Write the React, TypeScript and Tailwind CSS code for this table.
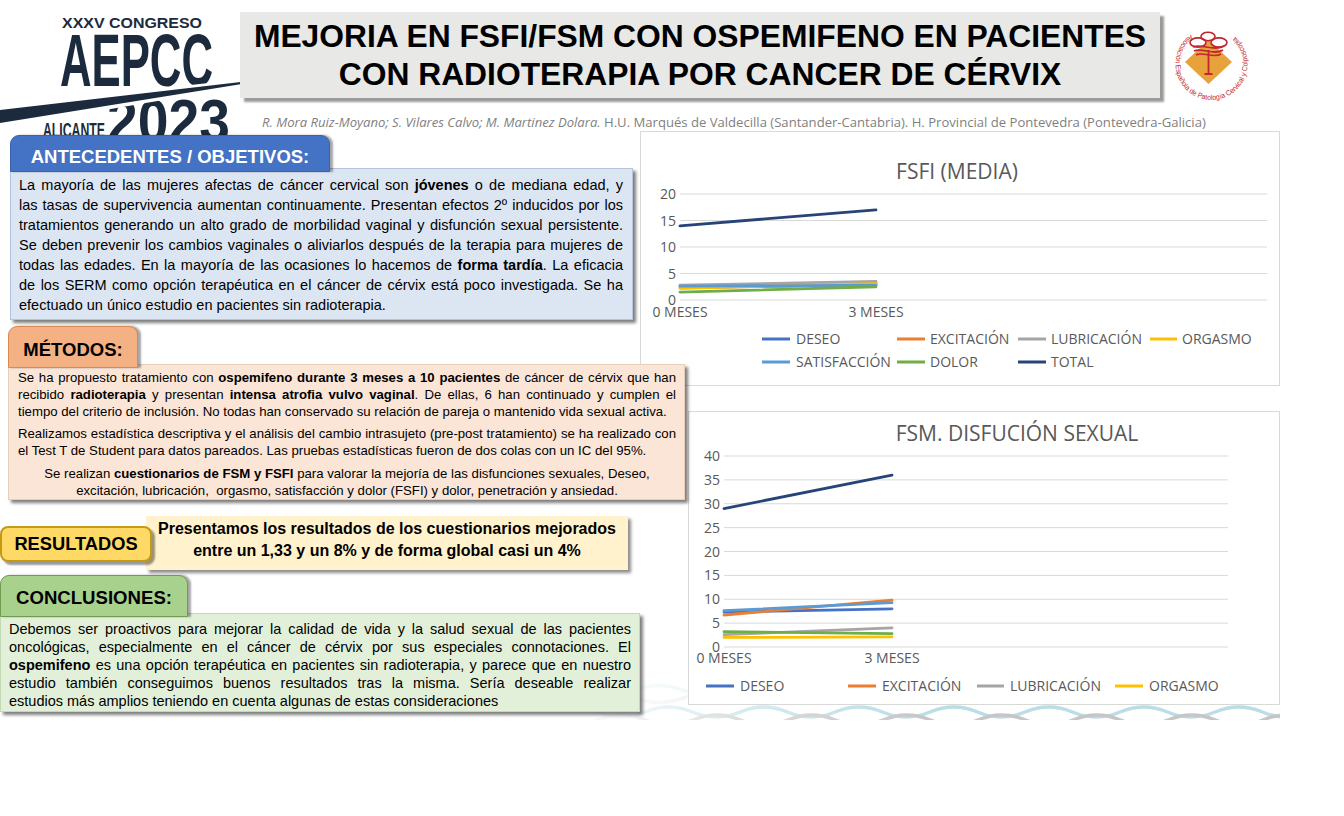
import React from "react";

const SANS = "font-['Liberation_Sans',Arial,Helvetica,sans-serif]";

function J({ children }: { children: React.ReactNode }) {
  return <div className="whitespace-nowrap text-justify [text-align-last:justify]">{children}</div>;
}
function L({ children }: { children: React.ReactNode }) {
  return <div className="whitespace-nowrap">{children}</div>;
}

function AepccLogo() {
  const navy = "#1b2b3d";
  const ff = "'Liberation Sans', Arial, sans-serif";
  return (
    <svg width="240" height="140" viewBox="0 0 240 140" className="block shrink-0 overflow-visible">
      <text x="62" y="28" textLength="140" lengthAdjust="spacingAndGlyphs" fontFamily={ff} fontWeight="700" fontSize="14" fill={navy}>
        XXXV CONGRESO
      </text>
      <text x="60" y="86" textLength="153" lengthAdjust="spacingAndGlyphs" fontFamily={ff} fontWeight="700" fontSize="74" fill={navy}>
        AEPCC
      </text>
      <text x="107" y="142" textLength="123" lengthAdjust="spacingAndGlyphs" fontFamily={ff} fontWeight="700" fontSize="62" fill={navy}>
        2023
      </text>
      <text x="43" y="137" textLength="62" lengthAdjust="spacingAndGlyphs" fontFamily={ff} fontWeight="700" fontSize="21" fill={navy}>
        ALICANTE
      </text>
      <polygon points="0,106 245,79 245,86 0,128" fill="#ffffff" />
      <polygon points="0,110 245,81.5 245,83.5 0,123" fill={navy} />
    </svg>
  );
}

function Emblem() {
  const red = "#c1272d";
  return (
    <svg width="80" height="80" viewBox="0 0 80 80" className="block ml-[10px] mt-[24px] shrink-0">
      <defs>
        <path id="ringPath" d="M 20.85 10.5 A 36 36 0 1 0 62.15 10.5" />
      </defs>
      <polygon points="38.5,16 62,38 38.5,60 15,38" fill="#e7a23b" />
      <path d="M38.5 26 V 50 M34.5 50 H42.5" stroke={red} strokeWidth="1.8" fill="none" />
      <ellipse cx="38" cy="12.5" rx="7" ry="4.2" stroke={red} strokeWidth="1.6" fill="none" />
      <ellipse cx="28" cy="18.5" rx="8" ry="4.6" stroke={red} strokeWidth="1.6" fill="none" />
      <ellipse cx="49" cy="18.5" rx="8" ry="4.6" stroke={red} strokeWidth="1.6" fill="none" />
      <path d="M23 23 C 31 19, 44 28, 54 22" stroke={red} strokeWidth="1.7" fill="none" />
      <path d="M24 27 C 32 23, 44 32, 53 26" stroke={red} strokeWidth="1.7" fill="none" />
      <path d="M26 31 C 33 27, 44 35, 51 30" stroke={red} strokeWidth="1.7" fill="none" />
      <text fontSize="7.4" fill={red} fontFamily="'Liberation Sans', Arial, sans-serif">
        <textPath href="#ringPath" textLength="178" lengthAdjust="spacingAndGlyphs">
          Asociación Española de Patología Cervical y Colposcopia
        </textPath>
      </text>
    </svg>
  );
}

function Waves() {
  const wave = (y: number, amp: number, phase: number) => {
    let d = `M ${-phase} ${y}`;
    for (let i = 0; i < 10; i++) d += ` q 23.75 ${-amp} 47.5 0 q 23.75 ${amp} 47.5 0`;
    return d;
  };
  return (
    <svg width="720" height="60" viewBox="0 0 720 60" className="absolute left-[560px] top-[660px]">
      <defs>
        <linearGradient id="fadeW" x1="0" x2="1" y1="0" y2="0">
          <stop offset="0" stopColor="#ffffff" stopOpacity="0" />
          <stop offset="0.25" stopColor="#ffffff" stopOpacity="0.6" />
          <stop offset="0.5" stopColor="#ffffff" stopOpacity="1" />
          <stop offset="1" stopColor="#ffffff" stopOpacity="1" />
        </linearGradient>
        <mask id="waveMask">
          <rect x="0" y="0" width="720" height="60" fill="url(#fadeW)" />
        </mask>
      </defs>
      <g mask="url(#waveMask)" fill="none" strokeWidth="3.5" opacity="0.8">
        <path d={wave(30, 9, 20)} stroke="#d8edf2" />
        <path d={wave(38, 9, 67)} stroke="#e3e3e3" />
        <path d={wave(52, 10, 10)} stroke="#a9d6e1" />
        <path d={wave(60, 10, 57)} stroke="#b9b9b9" />
      </g>
    </svg>
  );
}

type S = { n: string; c: string; a: number; b: number };

const C = {
  deseo: "#4472c4",
  exc: "#ed7d31",
  lub: "#a5a5a5",
  org: "#ffc000",
  sat: "#5b9bd5",
  dol: "#70ad47",
  tot: "#264478",
};

const FSFI: S[] = [
  { n: "DESEO", c: C.deseo, a: 2.3, b: 2.9 },
  { n: "EXCITACIÓN", c: C.exc, a: 2.6, b: 3.3 },
  { n: "LUBRICACIÓN", c: C.lub, a: 2.8, b: 3.5 },
  { n: "ORGASMO", c: C.org, a: 2.2, b: 3.1 },
  { n: "SATISFACCIÓN", c: C.sat, a: 2.6, b: 2.8 },
  { n: "DOLOR", c: C.dol, a: 1.5, b: 2.5 },
  { n: "TOTAL", c: C.tot, a: 14, b: 17 },
];

const FSM: S[] = [
  { n: "DESEO", c: C.deseo, a: 7.3, b: 8.0 },
  { n: "EXCITACIÓN", c: C.exc, a: 6.7, b: 9.8 },
  { n: "LUBRICACIÓN", c: C.lub, a: 2.6, b: 4.0 },
  { n: "ORGASMO", c: C.org, a: 2.0, b: 2.1 },
  { n: "SATISFACCIÓN", c: C.sat, a: 7.6, b: 9.3 },
  { n: "DOLOR", c: C.dol, a: 3.2, b: 2.8 },
  { n: "TOTAL", c: C.tot, a: 29, b: 36 },
];

const GRAY = "#595959";
const CFONT = "'Open Sans', 'Liberation Sans', sans-serif";

function Legend({ items }: { items: [number, number, number, number, string, string][] }) {
  return (
    <g>
      {items.map(([x1, x2, tx, cy, label, color]) => (
        <g key={label}>
          <line x1={x1} x2={x2} y1={cy} y2={cy} stroke={color} strokeWidth="3" />
          <text x={tx} y={cy + 5} fontSize="14" fill={GRAY}>
            {label}
          </text>
        </g>
      ))}
    </g>
  );
}

function FsfiChart() {
  const y = (v: number) => 168 - 5.3 * v;
  return (
    <div className="w-[640px] h-[255px] bg-white border border-[#d9d9d9] shrink-0">
      <svg width="638" height="253" className="block" fontFamily={CFONT}>
        <text x="316" y="47" textAnchor="middle" fontSize="21" fill={GRAY}>
          FSFI (MEDIA)
        </text>
        {[0, 5, 10, 15, 20].map((v) => (
          <g key={v}>
            <line x1="39" x2="626" y1={y(v)} y2={y(v)} stroke="#d9d9d9" strokeWidth="1" />
            <text x="35" y={y(v) + 5} textAnchor="end" fontSize="14" fill={GRAY}>
              {v}
            </text>
          </g>
        ))}
        <text x="39" y="185" textAnchor="middle" fontSize="14" fill={GRAY}>
          0 MESES
        </text>
        <text x="235" y="185" textAnchor="middle" fontSize="14" fill={GRAY}>
          3 MESES
        </text>
        {FSFI.map((s) => (
          <line key={s.n} x1="39" x2="235" y1={y(s.a)} y2={y(s.b)} stroke={s.c} strokeWidth="2.8" strokeLinecap="round" />
        ))}
        <Legend
          items={[
            [121, 149, 155, 207, "DESEO", C.deseo],
            [256, 284, 289, 207, "EXCITACIÓN", C.exc],
            [377, 405, 410, 207, "LUBRICACIÓN", C.lub],
            [509, 536, 541, 207, "ORGASMO", C.org],
            [121, 149, 155, 230, "SATISFACCIÓN", C.sat],
            [256, 284, 289, 230, "DOLOR", C.dol],
            [377, 405, 410, 230, "TOTAL", C.tot],
          ]}
        />
      </svg>
    </div>
  );
}

function FsmChart() {
  const y = (v: number) => 235 - 4.775 * v;
  return (
    <div className="ml-[48px] mt-[25px] w-[592px] h-[294px] bg-white border border-[#d9d9d9] shrink-0">
      <svg width="590" height="292" className="block" fontFamily={CFONT}>
        <text x="328" y="29" textAnchor="middle" fontSize="21" fill={GRAY}>
          FSM. DISFUCIÓN SEXUAL
        </text>
        {[0, 5, 10, 15, 20, 25, 30, 35, 40].map((v) => (
          <g key={v}>
            <line x1="35" x2="539" y1={y(v)} y2={y(v)} stroke="#d9d9d9" strokeWidth="1" />
            <text x="31" y={y(v) + 5} textAnchor="end" fontSize="14" fill={GRAY}>
              {v}
            </text>
          </g>
        ))}
        <text x="35" y="251" textAnchor="middle" fontSize="14" fill={GRAY}>
          0 MESES
        </text>
        <text x="203" y="251" textAnchor="middle" fontSize="14" fill={GRAY}>
          3 MESES
        </text>
        {FSM.map((s) => (
          <line key={s.n} x1="35" x2="203" y1={y(s.a)} y2={y(s.b)} stroke={s.c} strokeWidth="2.8" strokeLinecap="round" />
        ))}
        <Legend
          items={[
            [17, 45, 51, 274, "DESEO", C.deseo],
            [159, 187, 193, 274, "EXCITACIÓN", C.exc],
            [288, 315, 321, 274, "LUBRICACIÓN", C.lub],
            [426, 454, 460, 274, "ORGASMO", C.org],
          ]}
        />
      </svg>
    </div>
  );
}

export default function App() {
  return (
    <div className="w-[1344px] h-[816px] bg-white overflow-hidden">
      <div className={`relative w-[1280px] h-[720px] bg-white text-black ${SANS}`}>
        <Waves />
        {/* Header */}
        <div className="relative flex h-[131px]">
          <AepccLogo />
          <div className="flex flex-col">
            <div className="flex items-start">
              <div className="mt-[12px] w-[920px] h-[86px] shrink-0 bg-[#e8e8e6] shadow-[4px_4px_2px_#9a9a9a] pt-[5px] text-center font-bold text-[31.8px] leading-[38px] whitespace-nowrap">
                <div>MEJORIA EN FSFI/FSM CON OSPEMIFENO EN PACIENTES</div>
                <div>CON RADIOTERAPIA POR CANCER DE CÉRVIX</div>
              </div>
              <Emblem />
            </div>
            <div className="mt-[10px] pl-[22px] whitespace-nowrap font-['Open_Sans',sans-serif] text-[13.1px] leading-[17px] text-[#7f7f7f]">
              <span className="italic">R. Mora Ruiz-Moyano; S. Vilares Calvo; M. Martinez Dolara.</span> H.U. Marqués de Valdecilla (Santander-Cantabria). H. Provincial de Pontevedra (Pontevedra-Galicia)
            </div>
          </div>
        </div>

        {/* Body */}
        <div className="relative flex">
          {/* Left column */}
          <div className="relative z-10 w-[640px] shrink-0 flex flex-col items-start">
            {/* Antecedentes */}
            <div className="relative z-10 ml-[10px] mt-[4px] -mb-[4px] w-[320px] h-[37px] rounded-t-[9px] bg-[#4472c4] border border-[#3a62ab] shadow-[3px_0_2px_rgba(0,0,0,0.35)] flex items-center justify-center pt-[6px] text-white font-bold text-[18.5px]">
              ANTECEDENTES / OBJETIVOS:
            </div>
            <div className="ml-[10px] w-[623px] h-[152px] bg-[#dce6f2] border border-[#b4c4dc] shadow-[3px_3px_3px_rgba(0,0,0,0.5)] pl-[8px] pr-[9px] pt-[6px] text-[14.5px] leading-[20px]">
              <J>
                La mayoría de las mujeres afectas de cáncer cervical son <b>jóvenes</b> o de mediana edad, y
              </J>
              <J>las tasas de supervivencia aumentan continuamente. Presentan efectos 2º inducidos por los</J>
              <J>tratamientos generando un alto grado de morbilidad vaginal y disfunción sexual persistente.</J>
              <J>Se deben prevenir los cambios vaginales o aliviarlos después de la terapia para mujeres de</J>
              <J>
                todas las edades. En la mayoría de las ocasiones lo hacemos de <b>forma tardía</b>. La eficacia
              </J>
              <J>de los SERM como opción terapéutica en el cáncer de cérvix está poco investigada. Se ha</J>
              <L>efectuado un único estudio en pacientes sin radioterapia.</L>
            </div>

            {/* Métodos */}
            <div className="relative z-10 ml-[8px] mt-[6px] -mb-[4px] w-[130px] h-[42px] rounded-t-[9px] bg-[#f4b183] border border-[#d98a52] shadow-[3px_0_2px_rgba(0,0,0,0.35)] flex items-center justify-center pt-[6px] font-bold text-[18.5px]">
              MÉTODOS:
            </div>
            <div className="ml-[8px] w-[677px] h-[136px] bg-[#fbe5d6] border border-[#e8cdb9] shadow-[3px_3px_3px_rgba(0,0,0,0.5)] pl-[9px] pr-[8px] pt-[4px] text-[13.2px] leading-[17px]">
              <J>
                Se ha propuesto tratamiento con <b>ospemifeno durante 3 meses a 10 pacientes</b> de cáncer de cérvix que han
              </J>
              <J>
                recibido <b>radioterapia</b> y presentan <b>intensa atrofia vulvo vaginal</b>. De ellas, 6 han continuado y cumplen el
              </J>
              <L>tiempo del criterio de inclusión. No todas han conservado su relación de pareja o mantenido vida sexual activa.</L>
              <div className="mt-[5px]">
                <J>Realizamos estadística descriptiva y el análisis del cambio intrasujeto (pre-post tratamiento) se ha realizado con</J>
                <L>el Test T de Student para datos pareados. Las pruebas estadísticas fueron de dos colas con un IC del 95%.</L>
              </div>
              <div className="mt-[6px] text-center whitespace-nowrap">
                <div>
                  Se realizan <b>cuestionarios de FSM y FSFI</b> para valorar la mejoría de las disfunciones sexuales, Deseo,
                </div>
                <div>excitación, lubricación,&nbsp; orgasmo, satisfacción y dolor (FSFI) y dolor, penetración y ansiedad.</div>
              </div>
            </div>

            {/* Resultados */}
            <div className="mt-[16px] flex items-start">
              <div className="relative z-10 mt-[10px] w-[152px] h-[36px] rounded-[8px] bg-[#ffd966] border-2 border-[#c49a14] shadow-[3px_3px_2px_rgba(0,0,0,0.4)] flex items-center justify-center font-bold text-[18.3px]">
                RESULTADOS
              </div>
              <div className="-ml-[6px] w-[482px] h-[54px] bg-[#fff2cc] shadow-[3px_3px_3px_rgba(0,0,0,0.45)] pt-[2px] text-center font-bold text-[16px] leading-[22px] whitespace-nowrap">
                <div>Presentamos los resultados de los cuestionarios mejorados</div>
                <div>entre un 1,33 y un 8% y de forma global casi un 4%</div>
              </div>
            </div>

            {/* Conclusiones */}
            <div className="relative z-10 mt-[5px] -mb-[4px] w-[188px] h-[42px] rounded-t-[9px] bg-[#a9d18e] border border-[#6f9c4f] shadow-[3px_0_2px_rgba(0,0,0,0.35)] flex items-center justify-center pt-[4px] font-bold text-[18.6px]">
              CONCLUSIONES:
            </div>
            <div className="w-[640px] h-[99px] bg-[#e2f0d9] border border-[#c3d9b4] shadow-[3px_3px_3px_rgba(0,0,0,0.5)] pl-[8px] pr-[8px] pt-[6px] text-[14.5px] leading-[18px]">
              <J>Debemos ser proactivos para mejorar la calidad de vida y la salud sexual de las pacientes</J>
              <J>oncológicas, especialmente en el cáncer de cérvix por sus especiales connotaciones. El</J>
              <J>
                <b>ospemifeno</b> es una opción terapéutica en pacientes sin radioterapia, y parece que en nuestro
              </J>
              <J>estudio también conseguimos buenos resultados tras la misma. Sería deseable realizar</J>
              <L>estudios más amplios teniendo en cuenta algunas de estas consideraciones</L>
            </div>
          </div>

          {/* Right column */}
          <div className="w-[640px] shrink-0 flex flex-col items-start">
            <FsfiChart />
            <FsmChart />
          </div>
        </div>
      </div>
    </div>
  );
}
